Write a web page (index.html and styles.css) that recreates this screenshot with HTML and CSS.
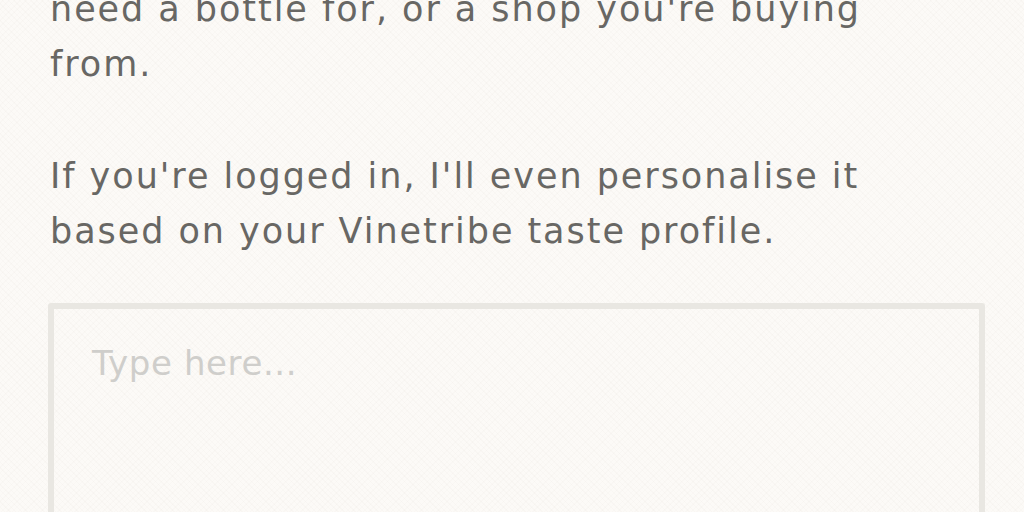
FILE: index.html
```html
<!DOCTYPE html>
<html lang="en">
<head>
    <meta charset="UTF-8">
    <meta name="viewport" content="width=device-width, initial-scale=1.0">
    <title>Vinetribe</title>
    <link rel="stylesheet" href="styles.css">
</head>
<body>
    <div class="chat">
        <div class="intro">
            <p>need a bottle for, or a shop you're buying from.</p>
            <p>If you're logged in, I'll even personalise it based on your Vinetribe taste profile.</p>
        </div>
        <textarea class="prompt" placeholder="Type here..."></textarea>
    </div>
</body>
</html>
```

FILE: styles.css
```css
:root {
    --bg-color: #fcfaf7;
    --text-color: #686764;
    --border-color: #e9e7e2;
    --placeholder-color: #cfcecb;
}
* {
    margin: 0;
    padding: 0;
    box-sizing: border-box;
}
html, body {
    height: 512px;
    overflow: hidden;
}
body {
    font-family: 'DejaVu Sans', 'Open Sans', sans-serif;
    background-color: var(--bg-color);
    background-image:
        repeating-linear-gradient(45deg, transparent 0 3px, rgba(120, 100, 80, 0.025) 3px 4px),
        repeating-linear-gradient(-45deg, transparent 0 3px, rgba(120, 100, 80, 0.02) 3px 4px);
    color: var(--text-color);
}
.chat {
    margin-top: -18px;
    padding: 0 39px 0 48px;
}
.intro {
    padding-left: 2px;
    max-width: 900px;
}
.intro p {
    font-size: 35px;
    line-height: 55px;
    letter-spacing: 1.95px;
    margin-bottom: 57px;
}
.prompt {
    display: block;
    width: 100%;
    height: 222px;
    margin-top: -13px;
    padding: 34px 38px;
    font-family: inherit;
    font-size: 34px;
    letter-spacing: 0.6px;
    color: var(--text-color);
    background: transparent;
    border: 6px solid var(--border-color);
    border-radius: 3px;
    outline: none;
    resize: none;
}
.prompt::placeholder {
    color: var(--placeholder-color);
}
```
